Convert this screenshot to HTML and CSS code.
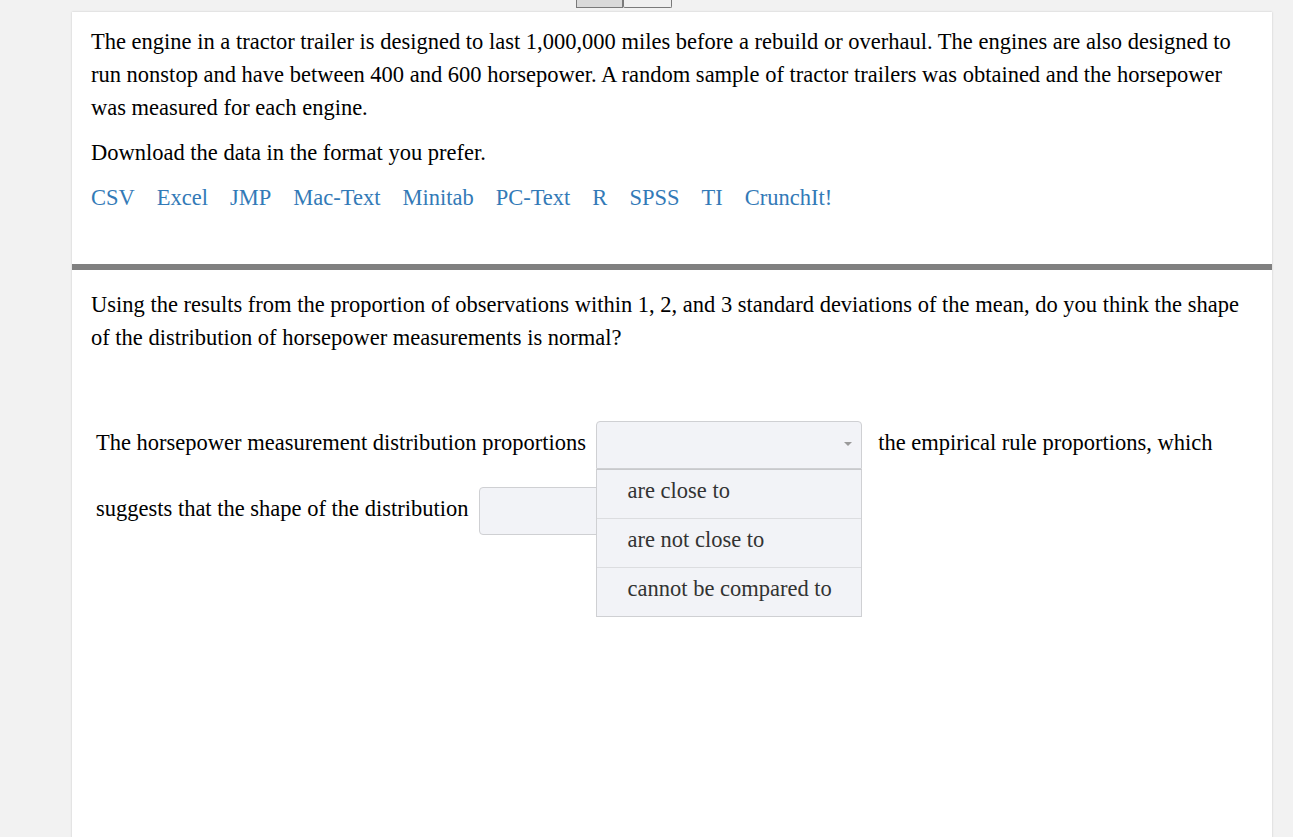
FILE: index.html
```html
<!DOCTYPE html>
<html>
<head>
<meta charset="utf-8">
<link rel="stylesheet" href="styles.css">
</head>
<body>
<div class="toolbar">
  <span class="tab tab-active"></span><span class="tab"></span>
</div>
<div class="card">
  <div class="intro">
    <p class="para">The engine in a tractor trailer is designed to last 1,000,000 miles before a rebuild or overhaul. The engines are also designed to run nonstop and have between 400 and 600 horsepower. A random sample of tractor trailers was obtained and the horsepower was measured for each engine.</p>
    <p class="para">Download the data in the format you prefer.</p>
    <div class="links">
      <a href="#">CSV</a><a href="#">Excel</a><a href="#">JMP</a><a href="#">Mac-Text</a><a href="#">Minitab</a><a href="#">PC-Text</a><a href="#">R</a><a href="#">SPSS</a><a href="#">TI</a><a href="#">CrunchIt!</a>
    </div>
  </div>
  <div class="divider"></div>
  <div class="question">
    <p class="para">Using the results from the proportion of observations within 1, 2, and 3 standard deviations of the mean, do you think the shape of the distribution of horsepower measurements is normal?</p>
    <div class="answer">
      The horsepower measurement distribution proportions <span class="select select-open"><span class="caret"></span><span class="menu"><span class="opt">are close to</span><span class="opt">are not close to</span><span class="opt">cannot be compared to</span></span></span> the empirical rule proportions, which suggests that the shape of the distribution <span class="select select-second"></span>
    </div>
  </div>
</div>
</body>
</html>
```
FILE: styles.css
```css
html, body {
  margin: 0;
  padding: 0;
  background: #f2f2f2;
  font-family: "Liberation Serif", "Times New Roman", serif;
  color: #000;
  overflow: hidden;
}
.toolbar {
  height: 12px;
  display: flex;
  padding-left: 576px;
  align-items: flex-start;
}
.tab {
  display: block;
  width: 45px;
  height: 7px;
  border: 1px solid #7a7a7a;
  border-top: none;
  background: #dadada;
}
.tab + .tab {
  width: 47px;
  background: #efefef;
  border-radius: 0 0 2px 2px;
}
.card {
  margin-left: 72px;
  width: 1200px;
  min-height: 900px;
  background: #fff;
  box-shadow: 0 0 2px rgba(0,0,0,0.18);
}
.intro {
  padding: 13px 19px 50px 19px;
}
.para {
  margin: 0 0 12px 0;
  font-size: 22.5px;
  line-height: 33px;
}
.links {
  display: flex;
  gap: 22px;
  font-size: 22.5px;
  line-height: 33px;
}
.links a {
  color: #337ab7;
  text-decoration: none;
}
.divider {
  height: 6px;
  background: #808080;
}
.question {
  padding: 18px 19px 0 19px;
}
.answer {
  margin-top: 58px;
  padding-left: 5px;
  font-size: 22.5px;
  line-height: 33px;
}
.select {
  display: inline-block;
  position: relative;
  vertical-align: middle;
  box-sizing: border-box;
  width: 266px;
  height: 48px;
  margin: 9px 11px 9px 4px;
  background: #f2f3f7;
  border: 1px solid #cfd0d3;
  border-radius: 4px;
}
.select-open {
  border-radius: 4px 4px 0 0;
}
.select-second {
  margin-left: 5px;
}
.caret {
  position: absolute;
  right: 9px;
  top: 20px;
  width: 0;
  height: 0;
  border-left: 4px solid transparent;
  border-right: 4px solid transparent;
  border-top: 4px solid #9a9a9a;
}
.menu {
  position: absolute;
  left: -1px;
  top: 47px;
  width: 266px;
  box-sizing: border-box;
  background: #f2f3f7;
  border: 1px solid #cfd0d3;
  border-top: 1px solid #c8c9cc;
  z-index: 2;
}
.opt {
  display: block;
  height: 49px;
  line-height: 42px;
  padding-left: 31px;
  color: #333;
  box-sizing: border-box;
  border-top: 1px solid #dcdde0;
}
.opt:first-child {
  border-top: none;
  height: 48px;
}
```
